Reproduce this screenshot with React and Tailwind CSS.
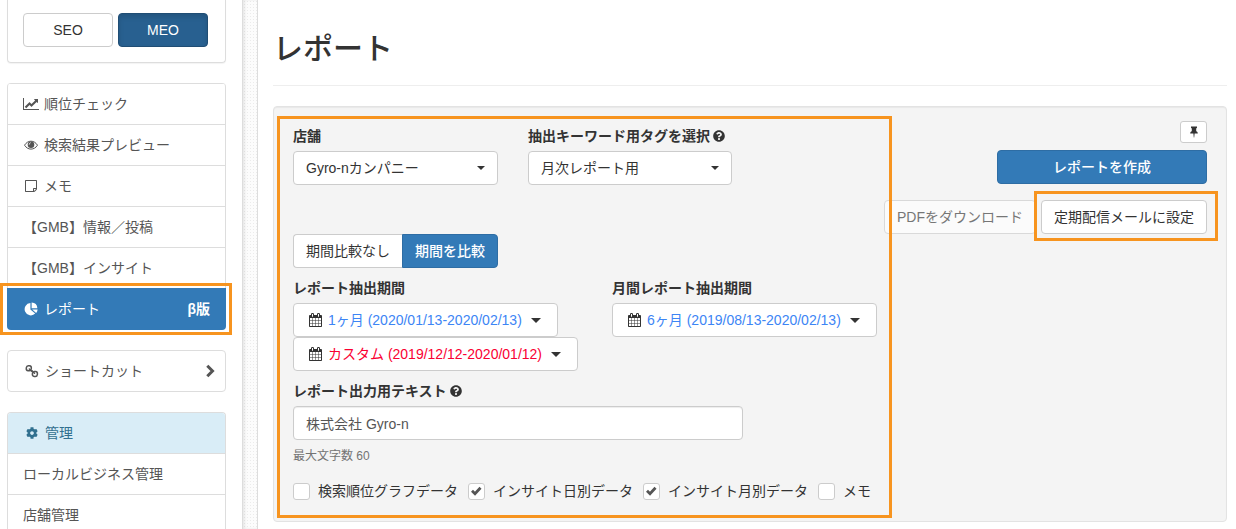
import { useState } from 'react';
import { FaCog, FaQuestionCircle } from 'react-icons/fa';

const LineChartIcon = () => (
  <svg viewBox="0 0 2048 1792" className="h-3.5 w-4" fill="currentColor" aria-hidden="true">
    <path d="M2048 1536v128H0V128h128v1408h1920zM1920 288v435q0 21-19.5 29.5T1865 745l-121-121-633 633q-10 10-23 10t-23-10L832 1024l-416 416-192-192 585-585q10-10 23-10t23 10l233 233 464-464-121-121q-16-16-7.5-35.5T1453 256h435q14 0 23 9t9 23z" />
  </svg>
);

const EyeIcon = () => (
  <svg viewBox="0 0 14 14" className="h-3.5 w-3.5" aria-hidden="true">
    <path d="M.5 7.200C2.200 4.600 4.400 3.200 7 3.200s4.800 1.400 6.500 4C11.800 9.800 9.600 11.100 7 11.100S2.200 9.800.5 7.200z" fill="none" stroke="currentColor" />
    <circle cx="7" cy="6.700" r="3.300" fill="currentColor" />
    <path d="M5.200 6.600c0-1 .6-1.700 1.500-1.900" fill="none" stroke="#fff" strokeWidth=".9" />
  </svg>
);

const NoteIcon = () => (
  <svg viewBox="0 0 1536 1792" className="h-3.5 w-3" fill="currentColor" aria-hidden="true">
    <path d="M1400 1280h-248v248q29-10 41-22l185-185q12-12 22-41zM1120 1152h288V256H128v1280h896v-288q0-40 28-68t68-28zM1536 224v1024q0 40-20 88t-48 76l-184 184q-28 28-76 48t-88 20H96q-40 0-68-28t-28-68V224q0-40 28-68t68-28h1344q40 0 68 28t28 68z" fillRule="evenodd" />
  </svg>
);

const PieIcon = () => (
  <svg viewBox="0 0 14 14" className="h-3.5 w-3.5" fill="currentColor" aria-hidden="true">
    <path d="M6.400 1v6.400l4.800 4.200A6.200 6.200 0 1 1 6.400 1z" />
    <path d="M7.600.6a6.200 6.200 0 0 1 5.800 5.700H7.600z" />
    <path d="M8.200 7.400h5.400a6 6 0 0 1-1.500 3.500z" />
  </svg>
);

const LinkIcon = () => (
  <svg viewBox="0 0 14 14" className="h-3.5 w-3.5" fill="none" stroke="currentColor" strokeWidth="1.500" aria-hidden="true">
    <rect x="1.300" y="1.800" width="5" height="5" rx="2.200" transform="rotate(8 3.800 4.300)" />
    <rect x="7.400" y="7.500" width="5" height="5" rx="2.200" transform="rotate(8 9.900 10)" />
    <path d="M4.300 5l2.600 2.500M6.800 6.600l2.700 2.700" strokeLinecap="round" />
  </svg>
);

const ChevronIcon = () => (
  <svg viewBox="0 0 14 14" className="h-3.5 w-3.5" fill="none" stroke="currentColor" strokeWidth="3" aria-hidden="true">
    <path d="M4.300 1.800L9.500 7l-5.200 5.200" />
  </svg>
);

const CalendarIcon = () => (
  <svg viewBox="0 0 1664 1792" className="h-3.5 w-[13px]" fill="currentColor" aria-hidden="true">
    <path d="M128 1664h288v-288H128v288zM480 1664h320v-288H480v288zM128 1312h288V992H128v320zM480 1312h320V992H480v320zM128 928h288V640H128v288zM864 1664h320v-288H864v288zM480 928h320V640H480v288zM1248 1664h288v-288h-288v288zM864 1312h320V992H864v320zM512 448V160q0-13-9.500-22.500T480 128h-64q-13 0-22.500 9.500T384 160v288q0 13 9.500 22.500T416 480h64q13 0 22.500-9.500T512 448zM1248 1312h288V992h-288v320zM864 928h320V640H864v288zM1248 928h288V640h-288v288zM1280 448V160q0-13-9.500-22.500T1248 128h-64q-13 0-22.500 9.500T1152 160v288q0 13 9.500 22.500t22.500 9.500h64q13 0 22.500-9.500T1280 448zM1664 384v1280q0 52-38 90t-90 38H128q-52 0-90-38t-38-90V384q0-52 38-90t90-38h128v-96q0-66 47-113T416 0h64q66 0 113 47t47 113v96h384v-96q0-66 47-113t113-47h64q66 0 113 47t47 113v96h128q52 0 90 38t38 90z" fillRule="evenodd" />
  </svg>
);

const PinIcon = () => (
  <svg viewBox="0 0 12 12" className="h-3 w-3" fill="currentColor" aria-hidden="true">
    <path d="M3 .5h6v1.300L8.200 2.500v2.800c1 .4 1.600 1.100 1.600 2.200H6.600L6.200 11.500h-.4L5.400 7.500H2.200c0-1.100.6-1.800 1.600-2.200V2.500L3 1.800z" />
  </svg>
);

const Caret = ({ className = 'h-1 w-2' }) => (
  <svg viewBox="0 0 8 4" className={className} fill="currentColor" aria-hidden="true">
    <path d="M0 0h8L4 4z" />
  </svg>
);

const menu = [
  { label: '順位チェック', icon: <LineChartIcon /> },
  { label: '検索結果プレビュー', icon: <EyeIcon /> },
  { label: 'メモ', icon: <NoteIcon /> },
  { label: '【GMB】情報／投稿' },
  { label: '【GMB】インサイト' },
];

const outputs = [
  { label: '検索順位グラフデータ', checked: false },
  { label: 'インサイト日別データ', checked: true },
  { label: 'インサイト月別データ', checked: true },
  { label: 'メモ', checked: false },
];

function MenuItem({ icon, children }) {
  return (
    <a href="#" className="flex h-[41px] items-center gap-[5px] border-t border-[#ddd] px-[15px] text-[#555]">
      {icon && <span className="flex w-4 justify-center">{icon}</span>}
      <span>{children}</span>
    </a>
  );
}

function SelectBox({ id, label, help, value }) {
  return (
    <div>
      <label htmlFor={id} className="mb-[5px] flex items-center gap-[3px] font-bold whitespace-nowrap">
        {label}
        {help && <FaQuestionCircle className="h-3 w-3" />}
      </label>
      <div className="relative">
        <select
          id={id}
          className="h-[34px] w-full appearance-none rounded border border-[#ccc] bg-white px-3 text-[#333]"
        >
          <option>{value}</option>
        </select>
        <span className="pointer-events-none absolute inset-y-0 right-[13px] flex items-center">
          <Caret />
        </span>
      </div>
    </div>
  );
}

function PeriodButton({ color, children }) {
  return (
    <button
      type="button"
      className="flex h-[34px] items-center rounded border border-[#ccc] bg-white pr-4 pl-[15px] whitespace-nowrap"
    >
      <CalendarIcon />
      <span className={`mr-[9px] ml-[6px] ${color}`}>{children}</span>
      <Caret className="h-[5px] w-[10px]" />
    </button>
  );
}

function CheckItem({ label, checked, onChange }) {
  return (
    <label className="flex items-center gap-2 whitespace-nowrap">
      <span className="relative flex h-[17px] w-[17px]">
        <input
          type="checkbox"
          checked={checked}
          onChange={onChange}
          className="h-[17px] w-[17px] appearance-none rounded-[3px] border border-[#ccc] bg-white"
        />
        {checked && (
          <svg viewBox="0 0 17 17" className="pointer-events-none absolute inset-0" fill="none" stroke="#555" strokeWidth="2.800" aria-hidden="true">
            <path d="M4 7.800l3 3 5.500-6" />
          </svg>
        )}
      </span>
      {label}
    </label>
  );
}

function Sidebar() {
  return (
    <nav className="w-[242px] shrink-0 bg-white pr-4 pl-[7px]">
      <div className="mb-5 flex gap-[5px] rounded-b border border-t-0 border-[#ddd] pt-[13px] pr-[17px] pb-[15px] pl-[15px] shadow-[0_1px_1px_rgba(0,0,0,0.05)]">
        <button type="button" className="h-[34px] flex-1 rounded border border-[#ccc] bg-white text-[#333]">
          SEO
        </button>
        <button
          type="button"
          className="h-[34px] flex-1 rounded border border-[#204d74] bg-[#286090] text-white shadow-[inset_0_3px_5px_rgba(0,0,0,0.125)]"
        >
          MEO
        </button>
      </div>

      <div className="mb-5">
        <div className="overflow-hidden rounded-t border-x border-t-0 border-[#ddd]">
          {menu.map((item) => (
            <MenuItem key={item.label} icon={item.icon}>
              {item.label}
            </MenuItem>
          ))}
        </div>
        <div className="relative">
          <a
            href="#"
            className="flex h-[42px] items-center gap-[5px] rounded-b bg-[#337ab7] px-4 text-white"
          >
            <span className="flex w-4 justify-center">
              <PieIcon />
            </span>
            <span>レポート</span>
            <span className="ml-auto font-bold">β版</span>
          </a>
          <div className="pointer-events-none absolute -top-[5px] -right-[6px] -bottom-[5px] -left-[7px] border-3 border-[#f7941f]" />
        </div>
      </div>

      <a
        href="#"
        className="mb-5 flex h-[42px] items-center gap-[5px] rounded border border-[#ddd] pr-2 pl-4 text-[#555]"
      >
        <span className="flex w-4 justify-center">
          <LinkIcon />
        </span>
        <span className="flex-1">ショートカット</span>
        <ChevronIcon />
      </a>

      <div className="overflow-hidden rounded-t border-x border-t border-[#ddd]">
        <a
          href="#"
          className="flex h-10 items-center gap-[5px] bg-[#d9edf7] px-4 text-[#31708f]"
        >
          <span className="flex w-4 justify-center">
            <FaCog className="h-3 w-3" />
          </span>
          <span>管理</span>
        </a>
        <MenuItem>ローカルビジネス管理</MenuItem>
        <MenuItem>店舗管理</MenuItem>
      </div>
    </nav>
  );
}

export default function App() {
  const [checks, setChecks] = useState(outputs.map((o) => o.checked));
  const [text, setText] = useState('株式会社 Gyro-n');

  const toggle = (index) => {
    setChecks(checks.map((c, i) => (i === index ? !c : c)));
  };

  return (
    <div className="flex h-screen overflow-hidden bg-white font-['Liberation_Sans','Noto_Sans_CJK_JP',sans-serif] text-sm leading-5 text-[#333]">
      <Sidebar />

      {/* Divider strip */}
      <div className="w-4 shrink-0 border-x border-[#ddd] bg-[#fcfcfc] bg-[radial-gradient(#ebebeb_1px,transparent_1px)] bg-[size:3px_3px] shadow-[inset_2px_0_3px_rgba(0,0,0,0.08)]" />

      <main className="min-w-0 flex-1 pr-[9px] pl-[15px]">
        <h1 className="mb-5 border-b border-[#eee] pt-[29px] pb-[17px] text-3xl leading-[39px] font-medium">レポート</h1>

        <section className="flex gap-[10px] rounded border border-[#e3e3e3] bg-[#f4f4f4] px-[19px] pt-[14px] pb-5 shadow-[inset_0_1px_1px_rgba(0,0,0,0.05)]">
          {/* Extraction settings */}
          <div className="relative min-w-0 flex-1 pt-[5px]">
            <div className="mb-[49px] grid grid-cols-[205px_204px] gap-[30px]">
              <SelectBox id="shop" label="店舗" value="Gyro-nカンパニー" />
              <SelectBox id="tag" label="抽出キーワード用タグを選択" help value="月次レポート用" />
            </div>

            <div className="mb-[10px] flex">
              <button type="button" className="h-[34px] rounded-l border border-r-0 border-[#ccc] bg-white px-3">
                期間比較なし
              </button>
              <button type="button" className="h-[34px] rounded-r border border-[#2e6da4] bg-[#337ab7] px-3 font-medium text-white">
                期間を比較
              </button>
            </div>

            <div className="mb-[10px] flex gap-[34px]">
              <div>
                <p className="mb-[5px] font-bold">レポート抽出期間</p>
                <div className="flex flex-col items-start">
                  <PeriodButton color="text-[#3d85f5]">1ヶ月 (2020/01/13-2020/02/13)</PeriodButton>
                  <PeriodButton color="text-[#fa0032]">カスタム (2019/12/12-2020/01/12)</PeriodButton>
                </div>
              </div>
              <div>
                <p className="mb-[5px] font-bold">月間レポート抽出期間</p>
                <PeriodButton color="text-[#3d85f5]">6ヶ月 (2019/08/13-2020/02/13)</PeriodButton>
              </div>
            </div>

            <label htmlFor="output-text" className="mb-[5px] flex items-center gap-[3px] font-bold">
              レポート出力用テキスト
              <FaQuestionCircle className="h-3 w-3" />
            </label>
            <input
              id="output-text"
              type="text"
              maxLength={60}
              value={text}
              onChange={(e) => setText(e.target.value)}
              className="block h-[34px] w-[450px] rounded border border-[#ccc] bg-white px-3 text-[#555] shadow-[inset_0_1px_1px_rgba(0,0,0,0.075)]"
            />
            <p className="mt-[6px] mb-[15px] text-xs leading-5 text-[#737373]">最大文字数 60</p>

            <div className="flex gap-[10px]">
              {outputs.map((item, i) => (
                <CheckItem key={item.label} label={item.label} checked={checks[i]} onChange={() => toggle(i)} />
              ))}
            </div>

            <div className="pointer-events-none absolute -top-[5px] -right-[18px] -bottom-[17px] -left-4 z-10 border-3 border-[#f7941f]" />
          </div>

          {/* Actions */}
          <div className="flex shrink-0 flex-col items-end">
            <button
              type="button"
              aria-label="固定"
              className="mb-[7px] flex h-[22px] w-[27px] items-center justify-center rounded-[3px] border border-[#ccc] bg-white"
            >
              <PinIcon />
            </button>
            <button
              type="button"
              className="mb-4 h-[34px] w-[210px] rounded border border-[#2e6da4] bg-[#337ab7] font-medium text-white"
            >
              レポートを作成
            </button>
            <div className="flex gap-[5px]">
              <button type="button" disabled className="h-[34px] rounded border border-[#ccc] bg-white px-3 whitespace-nowrap opacity-65">
                PDFをダウンロード
              </button>
              <div className="relative">
                <button type="button" className="h-[34px] rounded border border-[#ccc] bg-white px-3 whitespace-nowrap">
                  定期配信メールに設定
                </button>
                <div className="pointer-events-none absolute -top-[9px] -right-[11px] -bottom-[7px] -left-[7px] border-3 border-[#f7941f]" />
              </div>
            </div>
          </div>
        </section>
      </main>
    </div>
  );
}
